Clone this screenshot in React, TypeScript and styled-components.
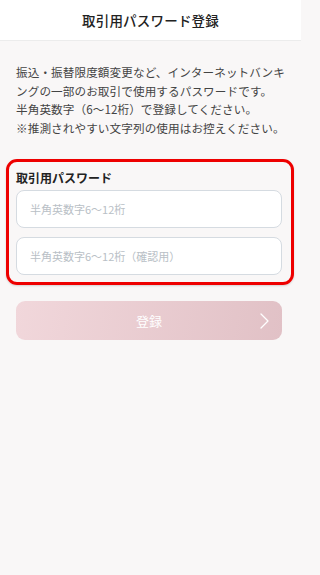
import React from "react";
import styled, { createGlobalStyle } from "styled-components";

const GlobalStyle = createGlobalStyle`
  html, body {
    margin: 0;
    padding: 0;
    background: #f9f7f7;
    font-family: "Noto Sans CJK JP", "Noto Sans", sans-serif;
    color: #333;
  }
`;

const Page = styled.div`
  width: 301px;
  min-height: 575px;
  background: #f9f7f7;
  display: flex;
  flex-direction: column;
`;

const Header = styled.header`
  height: 40px;
  background: #fff;
  border-bottom: 1px solid #ececec;
  display: flex;
  align-items: center;
  justify-content: center;
  font-size: 13.5px;
  font-weight: 500;
  color: #222;
  letter-spacing: 0.2px;
`;

const Body = styled.main`
  padding: 22px 19px 0 16px;
  display: flex;
  flex-direction: column;
`;

const Lead = styled.p`
  margin: 0 -3px 0 0;
  font-size: 11.6px;
  line-height: 18.6px;
  color: #444;
  letter-spacing: 0.1px;
`;

const Highlight = styled.section`
  margin: 22px -12px 0 -10px;
  border: 3px solid #ee0000;
  border-radius: 11px;
  padding: 7px 9px 7px 7px;
  display: flex;
  flex-direction: column;
  gap: 9px;
  box-shadow: 0 1px 2px rgba(0, 0, 0, 0.15);
`;

const Label = styled.div`
  font-size: 12px;
  font-weight: 700;
  color: #222;
  line-height: 16px;
  margin-top: 1px;
  margin-bottom: -5px;
`;

const Input = styled.input`
  box-sizing: border-box;
  width: 100%;
  height: 38px;
  border: 1px solid #d5dbe1;
  border-radius: 8px;
  background: #fff;
  padding: 0 13px;
  font-family: inherit;
  font-size: 11px;
  color: #333;
  outline: none;
  &::placeholder {
    color: #b9c0c6;
  }
`;

const Submit = styled.button`
  margin-top: 16px;
  position: relative;
  height: 39px;
  border: none;
  border-radius: 9px;
  background: linear-gradient(100deg, #f1d7db 0%, #e1c1c6 100%);
  color: #fff;
  font-family: inherit;
  font-size: 13px;
  display: flex;
  align-items: center;
  justify-content: center;
  cursor: default;
`;

const Chevron = styled.svg`
  position: absolute;
  right: 13px;
  top: 50%;
  transform: translateY(-50%);
`;

export default function App() {
  return (
    <Page>
      <GlobalStyle />
      <Header>取引用パスワード登録</Header>
      <Body>
        <Lead>
          振込・振替限度額変更など、インターネットバンキングの一部のお取引で使用するパスワードです。
          <br />
          半角英数字（6〜12桁）で登録してください。
          <br />
          ※推測されやすい文字列の使用はお控えください。
        </Lead>
        <Highlight>
          <Label>取引用パスワード</Label>
          <Input type="password" placeholder="半角英数字6〜12桁" />
          <Input type="password" placeholder="半角英数字6〜12桁（確認用）" />
        </Highlight>
        <Submit disabled>
          登録
          <Chevron width="9" height="16" viewBox="0 0 9 16" fill="none">
            <path d="M1 1L8 8L1 15" stroke="#fff" strokeWidth="1.3" strokeLinecap="round" strokeLinejoin="round" />
          </Chevron>
        </Submit>
      </Body>
    </Page>
  );
}
